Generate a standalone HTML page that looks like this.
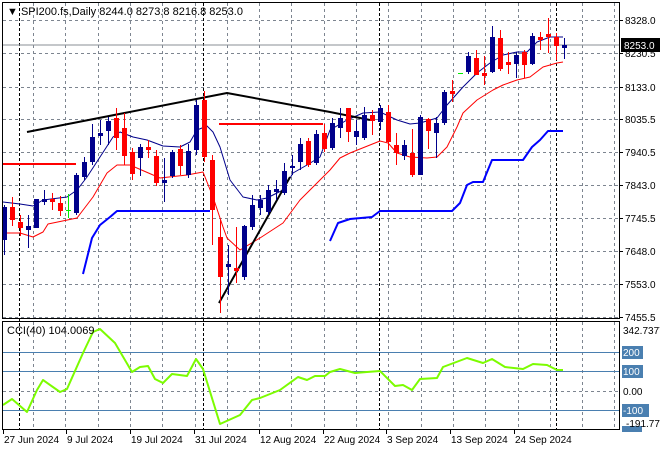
<!DOCTYPE html>
<html><head><meta charset="utf-8"><style>
html,body{margin:0;padding:0;background:#fff;width:660px;height:450px;overflow:hidden}
svg{display:block;font-family:"Liberation Sans",sans-serif}
</style></head><body>
<svg id="s" width="660" height="450" xmlns="http://www.w3.org/2000/svg">
<rect width="660" height="450" fill="#fff"/>
<g id="grid"></g>
<line x1="2" y1="45" x2="620" y2="45" stroke="#8a8f96" stroke-width="1"/>
<g id="ind"></g>
<g id="cdl"></g>
<rect x="2.5" y="2.5" width="617" height="316" fill="none" stroke="#000"/>
<rect x="2.5" y="321.5" width="617" height="108" fill="none" stroke="#000"/>
<text x="7" y="15" font-size="11" fill="#000">▼ SPI200.fs,Daily  8244.0 8273.8 8216.8 8253.0</text>
<text x="7" y="334" font-size="11" fill="#000">CCI(40) 104.0069</text>
<g id="axis" font-size="10" fill="#000"></g>
</svg>
<script>
var NS="http://www.w3.org/2000/svg";
function el(p,t,a,txt){var e=document.createElementNS(NS,t);for(var k in a)e.setAttribute(k,a[k]);if(txt!=null)e.textContent=txt;document.getElementById(p).appendChild(e);return e;}
function pl(p,pts,c,w){el(p,"polyline",{points:pts.map(function(q){return q.join(",")}).join(" "),fill:"none",stroke:c,"stroke-width":w,"stroke-linejoin":"round"});}
// grid
var hy=[20,53,87,119,152,185,218,251,284,317];
hy.forEach(function(y){el("grid","line",{x1:3,y1:y+.5,x2:619,y2:y+.5,stroke:"#7d8590","stroke-dasharray":"3,3"});});
el("grid","line",{x1:3,y1:391.5,x2:619,y2:391.5,stroke:"#7d8590","stroke-dasharray":"3,3"});
for(var k=0;k<19;k++){var x=Math.round(33+32.3*k)+.5;el("grid","line",{x1:x,y1:3,x2:x,y2:318,stroke:"#7d8590","stroke-dasharray":"3,3"});el("grid","line",{x1:x,y1:322,x2:x,y2:429,stroke:"#7d8590","stroke-dasharray":"3,3"});}
[19,203,379,556].forEach(function(x){el("grid","line",{x1:x+.5,y1:3,x2:x+.5,y2:429,stroke:"#000","stroke-dasharray":"3,2"});});
[352,371,410].forEach(function(y){el("grid","line",{x1:3,y1:y+.5,x2:619,y2:y+.5,stroke:"#4a7fb0"});});
// indicator lines
pl("ind",[[3,202],[20,204],[33,206],[43,200],[67,197],[77,190],[87,177],[100,157],[113,137],[120,132],[133,137],[147,140],[163,146],[180,147],[190,142],[197,130],[207,126],[213,132],[220,147],[230,180],[243,197],[257,200],[267,198],[283,190],[293,173],[307,165],[320,157],[330,130],[347,120],[363,113],[380,112],[397,120],[410,124],[420,123],[437,118],[447,105],[463,87],[477,73],[490,63],[503,55],[517,52],[527,52],[537,42],[550,37],[563,37]],"#00008b",1);
pl("ind",[[3,233],[20,233],[33,237],[43,232],[48,224],[77,218],[93,197],[107,173],[117,165],[130,165],[160,178],[187,175],[203,172],[213,197],[223,227],[227,238],[240,250],[260,238],[283,223],[300,200],[330,170],[340,158],[350,153],[380,141],[388,143],[397,153],[410,157],[427,158],[437,157],[447,147],[457,127],[463,113],[477,100],[493,90],[503,85],[517,80],[530,77],[543,67],[557,63],[563,62]],"#ff0000",1);
pl("ind",[[83,274],[92,238],[100,225],[110,217],[117,211],[210,211]],"#0000ff",2);
pl("ind",[[330,241],[338,223],[350,219],[372,217],[380,211],[452,211],[460,203],[467,185],[473,182],[483,182],[492,160],[523,160],[532,147],[540,140],[548,131],[563,131]],"#0000ff",2);
pl("ind",[[27,132],[227,93],[330,112],[370,120]],"#000",2);
pl("ind",[[219,303],[290,177]],"#000",2);
pl("ind",[[3,164],[76,164]],"#ff0000",2);
pl("ind",[[219,124],[323,124]],"#ff0000",2);
pl("ind",[[3,405],[12,399],[27,412],[37,390],[43,380],[60,392],[67,389],[83,353],[93,332],[100,329],[115,343],[132,372],[140,367],[148,366],[155,379],[163,383],[172,374],[187,376],[196,359],[203,369],[220,424],[240,415],[252,400],[260,398],[280,390],[298,377],[307,380],[315,376],[325,376],[330,372],[340,369],[355,373],[367,372],[380,371],[395,386],[403,385],[412,390],[420,379],[437,378],[443,367],[467,358],[483,363],[492,359],[505,367],[523,369],[533,364],[547,365],[557,370],[563,370]],"#7cfc00",2);
// candles: [type, bodyTop, bodyBot, wickTop, wickBot] b=blue r=red g=green
var C=[["b",207,240,205,255],["r",207,220,197,226],["r",222,228,215,236],["b",226,230,215,248],["b",199,228,199,228],["b",199,202,190,205],["r",199,201,193,210],["r",203,211,196,216],["g",210,210,194,218],["b",175,213,173,215],
["b",162,177,157,180],["b",137,162,124,165],["b",133,135,120,145],["b",121,131,117,145],["r",118,138,108,150],["r",128,156,113,165],["r",152,174,148,180],["b",147,158,144,176],["r",147,149,140,158],["r",156,183,150,186],
["b",180,182,158,202],["b",152,176,150,178],["r",149,166,145,175],["b",151,175,144,178],["b",105,150,100,155],["r",100,157,91,162],["r",160,210,155,245],["r",237,277,220,313],["b",264,266,245,295],["r",268,270,227,283],
["b",226,277,225,280],["b",205,227,195,230],["b",200,208,195,215],["b",190,212,185,215],["b",189,191,180,200],["b",171,193,163,195],["b",166,167,155,175],["b",144,162,138,170],["r",141,165,138,167],["b",134,163,130,165],
["r",133,149,124,152],["b",123,148,118,150],["b",118,128,108,138],["r",108,132,108,142],["b",131,137,120,145],["b",115,138,107,140],["r",115,121,110,135],["b",108,122,105,130],["r",112,142,105,150],["r",145,153,133,165],
["b",145,156,140,160],["r",153,175,129,177],["b",117,175,115,175],["r",119,131,118,149],["b",123,133,117,158],["b",92,123,90,125],["r",91,93,80,102],["g",73,73,73,73],["b",56,72,52,74],["r",58,75,50,75],
["r",73,75,56,85],["b",37,72,26,73],["r",38,69,30,71],["r",62,65,52,74],["b",55,64,52,78],["r",52,65,50,78],["b",36,64,33,65],["r",37,39,32,50],["r",34,37,18,53],["r",37,46,33,60],["b",45,48,38,59]];
var col={b:"#00008b",r:"#ff0000",g:"#00ee00"};
C.forEach(function(c,i){var x=4+8*i;var cl=col[c[0]];
 el("cdl","line",{x1:x+.5,y1:c[3],x2:x+.5,y2:c[4],stroke:cl});
 var h=Math.max(1,c[2]-c[1]);
 if(c[0]=="g")el("cdl","line",{x1:x-2,y1:c[1]+.5,x2:x+3,y2:c[1]+.5,stroke:cl});
 else el("cdl","rect",{x:x-2,y:c[1],width:5,height:h+(h<3?1:0),fill:cl});
});
// axis
var pv=["8328.0","8230.5","8133.0","8035.5","7940.5","7843.0","7745.5","7648.0","7553.0","7455.5"];
hy.forEach(function(y,i){el("axis","line",{x1:620,y1:y+.5,x2:623,y2:y+.5,stroke:"#000"});el("axis","text",{x:625,y:y+4},pv[i]);});
el("axis","rect",{x:621,y:38,width:39,height:14,fill:"#000"});
el("axis","text",{x:624,y:49,fill:"#fff"},"8253.0");
el("axis","text",{x:623,y:334},"342.7377");
[[352,"200"],[371,"100"],[410,"-100"]].forEach(function(a){var w=a[1].length*6+3;el("axis","rect",{x:622,y:a[0]-6,width:w,height:13,fill:"#4a7fb0"});el("axis","text",{x:623,y:a[0]+4,fill:"#fff"},a[1]);});
el("axis","text",{x:623,y:395},"0.00");
el("axis","rect",{x:622,y:426,width:20,height:6,fill:"#4a7fb0"});
el("axis","text",{x:626,y:427},"-191.7749");
var d=[[3,"27 Jun 2024"],[66,"9 Jul 2024"],[130,"19 Jul 2024"],[194,"31 Jul 2024"],[259,"12 Aug 2024"],[323,"22 Aug 2024"],[386,"3 Sep 2024"],[450,"13 Sep 2024"],[514,"24 Sep 2024"]];
d.forEach(function(a){el("axis","line",{x1:a[0]+.5,y1:430,x2:a[0]+.5,y2:434,stroke:"#000"});el("axis","text",{x:a[0]+1,y:443},a[1]);});
</script>
</body></html>
